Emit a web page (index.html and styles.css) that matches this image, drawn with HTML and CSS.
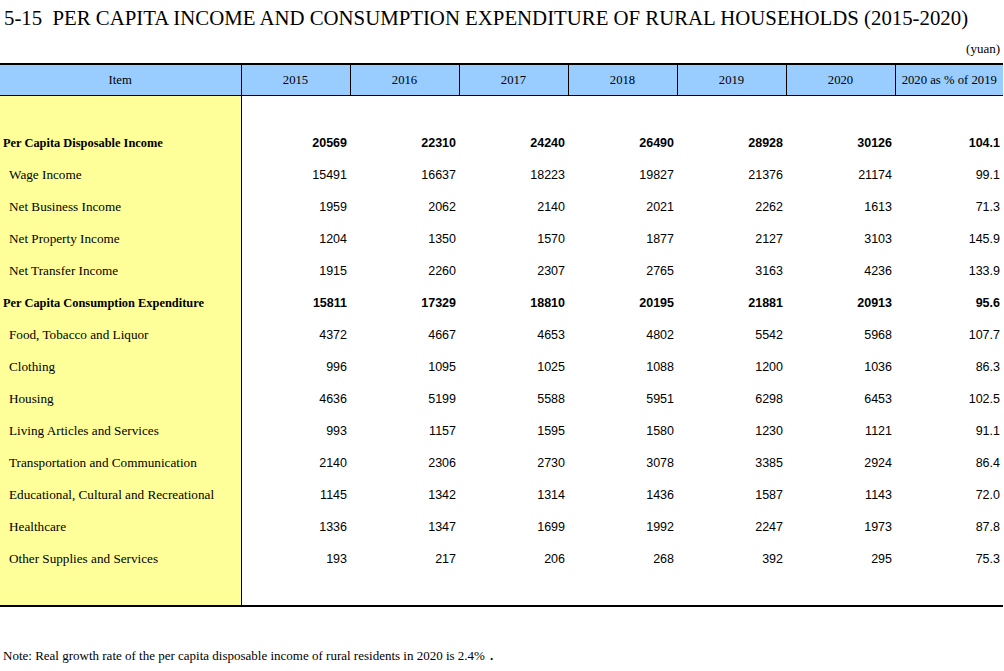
FILE: index.html
```html
<!DOCTYPE html>
<html>
<head>
<meta charset="utf-8">
<link rel="stylesheet" href="styles.css">
</head>
<body>
<h1 class="title">5-15&nbsp; PER CAPITA INCOME AND CONSUMPTION EXPENDITURE OF RURAL HOUSEHOLDS (2015-2020)</h1>
<div class="unit">(yuan)</div>
<table class="data">
  <colgroup>
    <col class="c-item"><col class="c-num"><col class="c-num"><col class="c-num"><col class="c-num"><col class="c-num"><col class="c-num"><col class="c-last">
  </colgroup>
  <thead>
    <tr class="head">
      <th>Item</th><th>2015</th><th>2016</th><th>2017</th><th>2018</th><th>2019</th><th>2020</th><th class="last">2020 as % of 2019</th>
    </tr>
  </thead>
  <tbody>
    <tr class="spacer"><td class="item"></td><td></td><td></td><td></td><td></td><td></td><td></td><td></td></tr>
    <tr class="total"><td class="item">Per Capita Disposable Income</td><td>20569</td><td>22310</td><td>24240</td><td>26490</td><td>28928</td><td>30126</td><td>104.1</td></tr>
    <tr><td class="item sub">Wage Income</td><td>15491</td><td>16637</td><td>18223</td><td>19827</td><td>21376</td><td>21174</td><td>99.1</td></tr>
    <tr><td class="item sub">Net Business Income</td><td>1959</td><td>2062</td><td>2140</td><td>2021</td><td>2262</td><td>1613</td><td>71.3</td></tr>
    <tr><td class="item sub">Net Property Income</td><td>1204</td><td>1350</td><td>1570</td><td>1877</td><td>2127</td><td>3103</td><td>145.9</td></tr>
    <tr><td class="item sub">Net Transfer Income</td><td>1915</td><td>2260</td><td>2307</td><td>2765</td><td>3163</td><td>4236</td><td>133.9</td></tr>
    <tr class="total"><td class="item">Per Capita Consumption Expenditure</td><td>15811</td><td>17329</td><td>18810</td><td>20195</td><td>21881</td><td>20913</td><td>95.6</td></tr>
    <tr><td class="item sub">Food, Tobacco and Liquor</td><td>4372</td><td>4667</td><td>4653</td><td>4802</td><td>5542</td><td>5968</td><td>107.7</td></tr>
    <tr><td class="item sub">Clothing</td><td>996</td><td>1095</td><td>1025</td><td>1088</td><td>1200</td><td>1036</td><td>86.3</td></tr>
    <tr><td class="item sub">Housing</td><td>4636</td><td>5199</td><td>5588</td><td>5951</td><td>6298</td><td>6453</td><td>102.5</td></tr>
    <tr><td class="item sub">Living Articles and Services</td><td>993</td><td>1157</td><td>1595</td><td>1580</td><td>1230</td><td>1121</td><td>91.1</td></tr>
    <tr><td class="item sub">Transportation and Communication</td><td>2140</td><td>2306</td><td>2730</td><td>3078</td><td>3385</td><td>2924</td><td>86.4</td></tr>
    <tr><td class="item sub">Educational, Cultural and Recreational</td><td>1145</td><td>1342</td><td>1314</td><td>1436</td><td>1587</td><td>1143</td><td>72.0</td></tr>
    <tr><td class="item sub">Healthcare</td><td>1336</td><td>1347</td><td>1699</td><td>1992</td><td>2247</td><td>1973</td><td>87.8</td></tr>
    <tr><td class="item sub">Other Supplies and Services</td><td>193</td><td>217</td><td>206</td><td>268</td><td>392</td><td>295</td><td>75.3</td></tr>
    <tr class="spacer end"><td class="item"></td><td></td><td></td><td></td><td></td><td></td><td></td><td></td></tr>
  </tbody>
</table>
<p class="note">Note: Real growth rate of the per capita disposable income of rural residents in 2020 is 2.4%<span class="dot">.</span></p>
</body>
</html>
```

FILE: styles.css
```css
html, body {
  margin: 0;
  padding: 0;
  background: #ffffff;
  color: #000000;
}

body {
  width: 1004px;
  font-family: "Liberation Serif", "Times New Roman", serif;
}

.title {
  margin: 0;
  padding: 6px 0 0 4px;
  height: 30px;
  box-sizing: border-box;
  font-size: 20.8px;
  font-weight: normal;
  line-height: 24px;
  white-space: nowrap;
}

.unit {
  height: 33px;
  box-sizing: border-box;
  padding: 12px 4px 0 0;
  text-align: right;
  font-size: 13px;
  line-height: 14px;
}

.data {
  width: 1003px;
  border-collapse: collapse;
  table-layout: fixed;
  border-top: 2px solid #000;
  border-bottom: 2px solid #000;
}

.c-item { width: 241px; }
.c-num { width: 109px; }
.c-last { width: 108px; }

.head th {
  background: #99ccff;
  height: 30px;
  padding: 0;
  font-family: "Liberation Serif", "Times New Roman", serif;
  font-size: 12.7px;
  font-weight: normal;
  text-align: center;
  border-right: 1px solid #000;
  border-bottom: 1px solid #000;
}

.head th.last {
  border-right: none;
}

.data td {
  height: 32px;
  padding: 0 3px 0 0;
  font-family: "Liberation Sans", Arial, sans-serif;
  font-size: 12.5px;
  text-align: right;
  white-space: nowrap;
}

.data td.item {
  background: #ffff99;
  border-right: 1px solid #000;
  text-align: left;
  padding: 0 0 0 3px;
  font-family: "Liberation Serif", "Times New Roman", serif;
  font-size: 12.4px;
}

.data td.sub {
  padding-left: 9px;
  font-size: 13.2px;
}

.data tr.spacer td {
  height: 31px;
}

.data tr.spacer.end td {
  height: 30px;
}

.data tr.total td {
  font-weight: bold;
}

.note {
  margin: 0;
  padding: 42px 0 0 3px;
  font-size: 13px;
  line-height: 14px;
}

.note .dot {
  font-weight: bold;
  padding-left: 5px;
}
```
